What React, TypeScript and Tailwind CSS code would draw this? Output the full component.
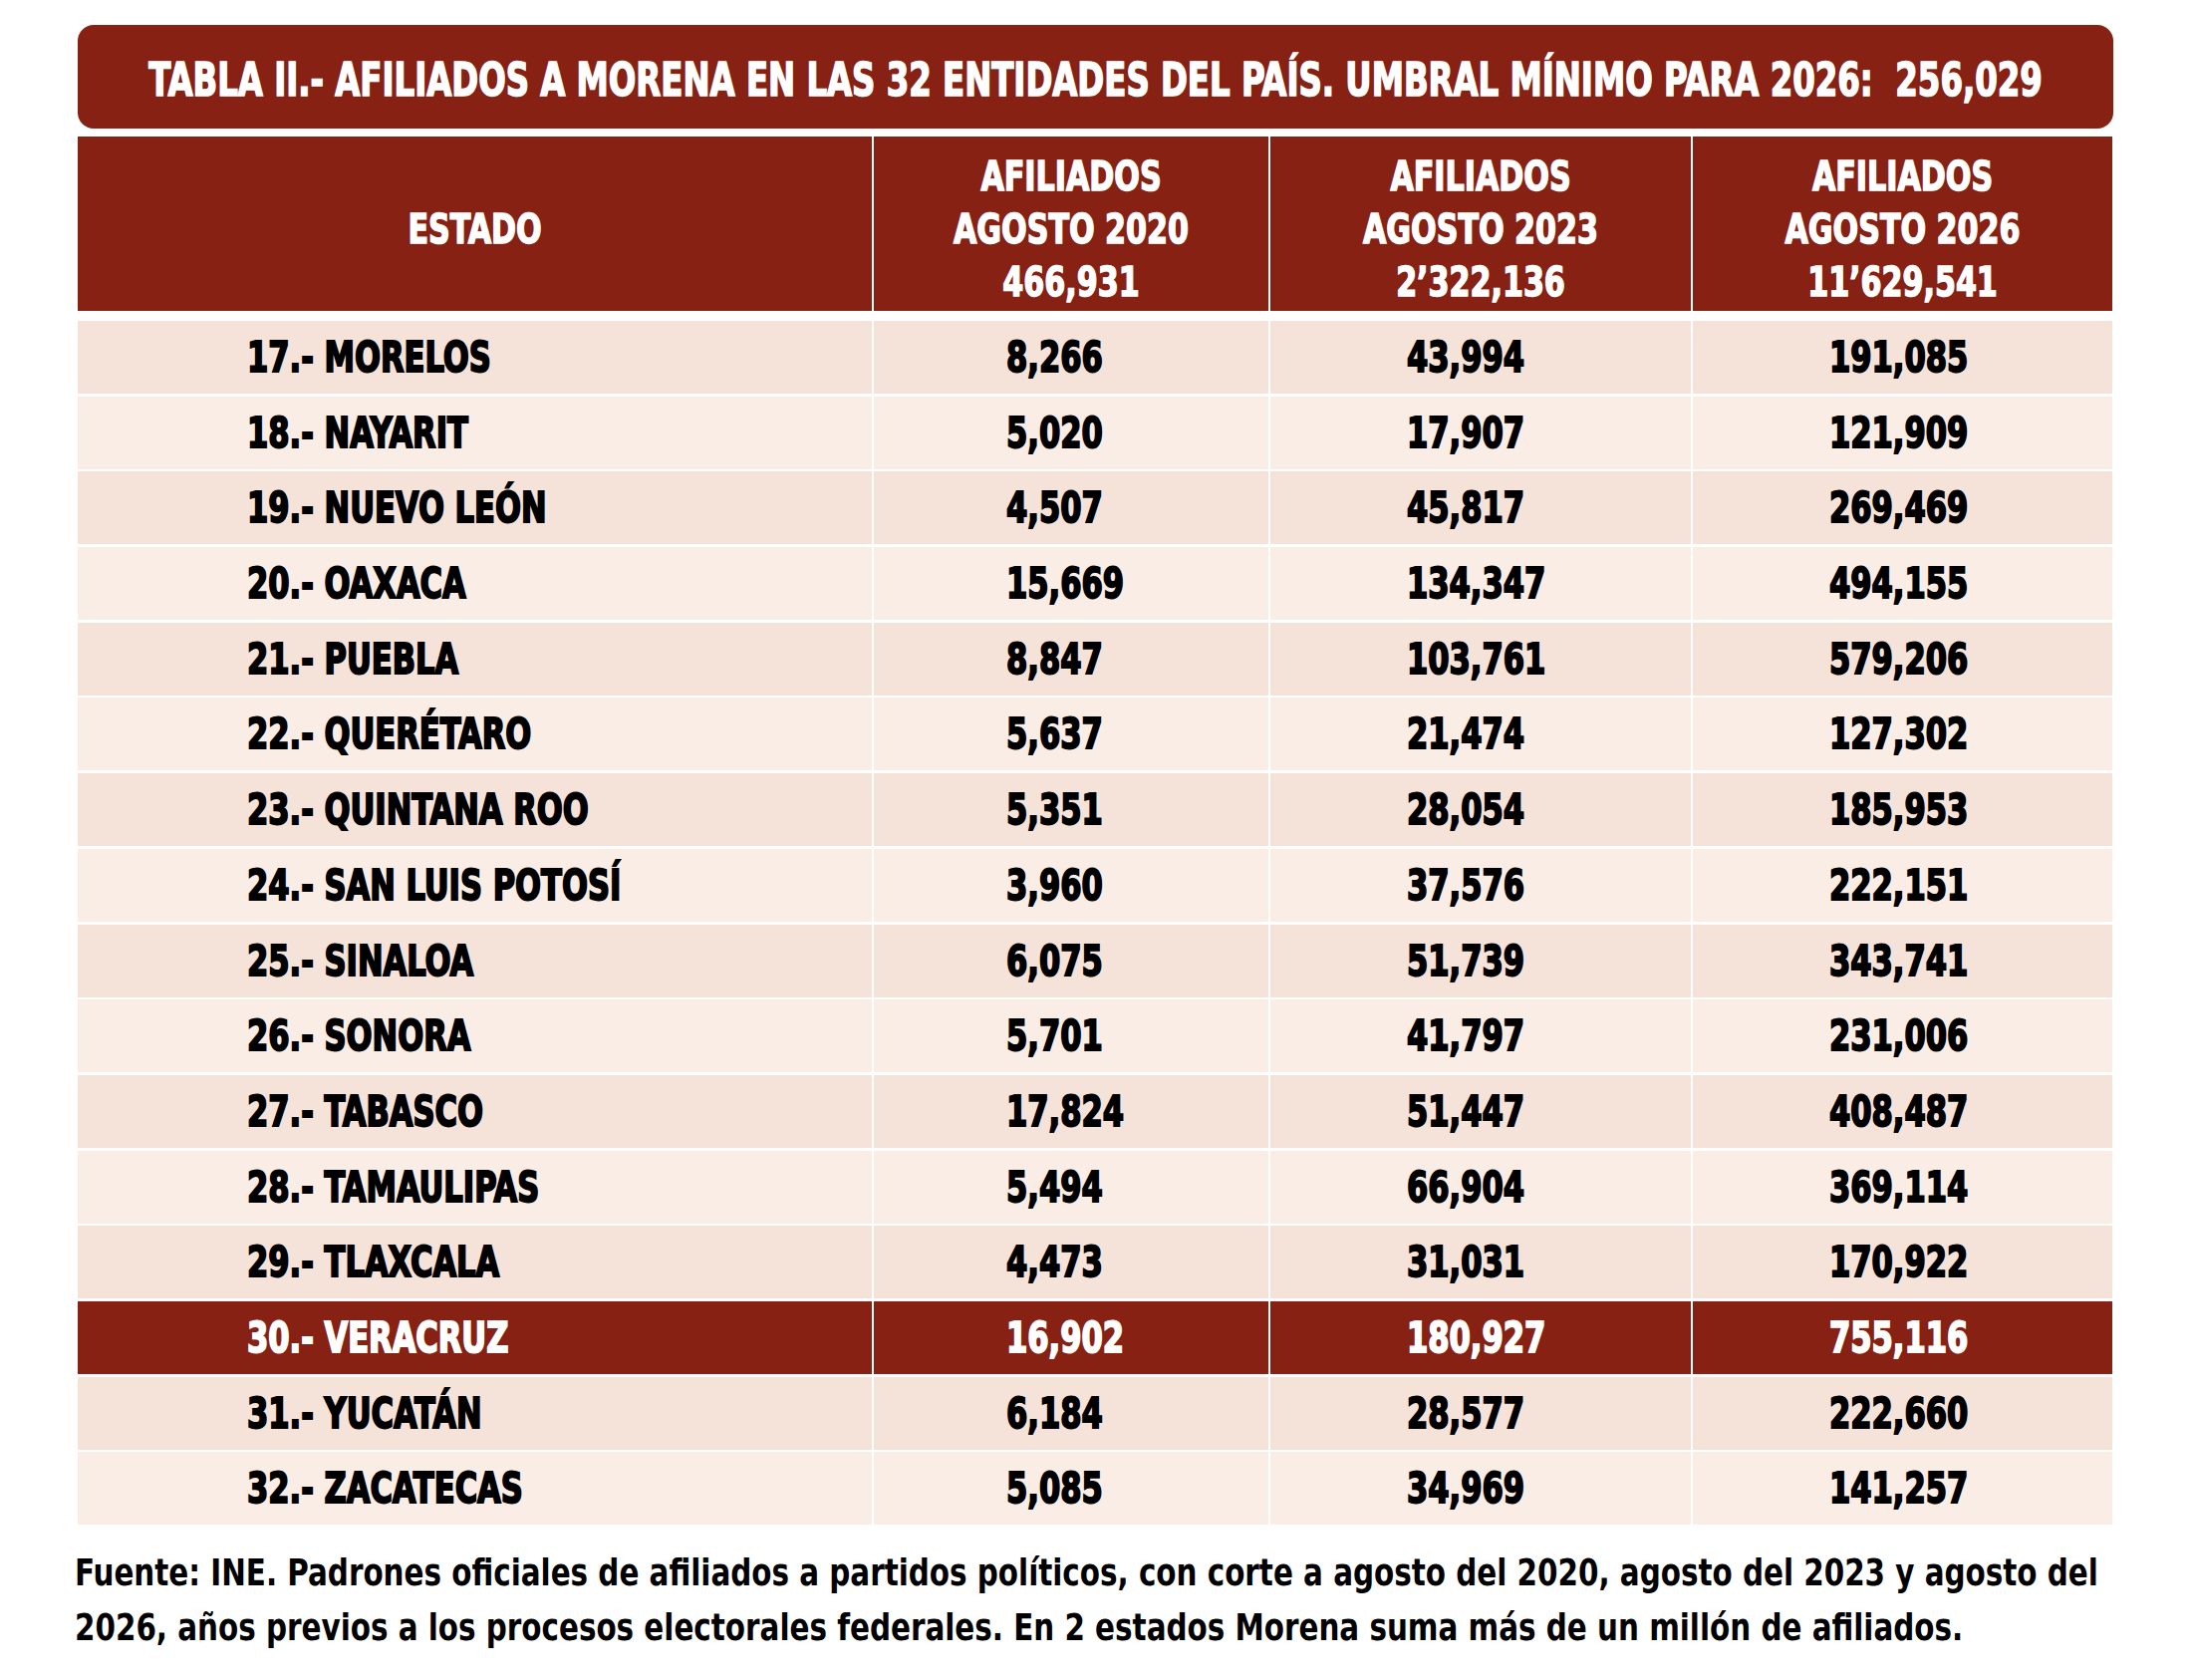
import React from 'react';

// -- data --
const rows = [
  { estado: "17.- MORELOS", a: "8,266", b: "43,994", c: "191,085" },
  { estado: "18.- NAYARIT", a: "5,020", b: "17,907", c: "121,909" },
  { estado: "19.- NUEVO LEÓN", a: "4,507", b: "45,817", c: "269,469" },
  { estado: "20.- OAXACA", a: "15,669", b: "134,347", c: "494,155" },
  { estado: "21.- PUEBLA", a: "8,847", b: "103,761", c: "579,206" },
  { estado: "22.- QUERÉTARO", a: "5,637", b: "21,474", c: "127,302" },
  { estado: "23.- QUINTANA ROO", a: "5,351", b: "28,054", c: "185,953" },
  { estado: "24.- SAN LUIS POTOSÍ", a: "3,960", b: "37,576", c: "222,151" },
  { estado: "25.- SINALOA", a: "6,075", b: "51,739", c: "343,741" },
  { estado: "26.- SONORA", a: "5,701", b: "41,797", c: "231,006" },
  { estado: "27.- TABASCO", a: "17,824", b: "51,447", c: "408,487" },
  { estado: "28.- TAMAULIPAS", a: "5,494", b: "66,904", c: "369,114" },
  { estado: "29.- TLAXCALA", a: "4,473", b: "31,031", c: "170,922" },
  { estado: "30.- VERACRUZ", a: "16,902", b: "180,927", c: "755,116", hot: true },
  { estado: "31.- YUCATÁN", a: "6,184", b: "28,577", c: "222,660" },
  { estado: "32.- ZACATECAS", a: "5,085", b: "34,969", c: "141,257" },
];

const cols = "grid grid-cols-[797px_396px_422px_421px] gap-x-[2px]";

// condensed look: condensed face stretched a bit vertically, stroked to get the heavy weight
const Cell = ({ bg, pl, children }: { bg: string; pl: string; children: React.ReactNode }) => (
  <div className={`${bg} ${pl} flex items-center`}>
    <span className="inline-block origin-left scale-y-[1.25]">{children}</span>
  </div>
);

const HeadCell = ({ lines }: { lines: string[] }) => (
  <div className="bg-[#862114] flex items-center justify-center pt-[10px]">
    <div className="flex flex-col items-center text-white text-[33.5px] leading-[43px] font-bold origin-center scale-y-[1.23] [-webkit-text-stroke:1.2px_currentColor]">
      {lines.map(l => <span key={l}>{l}</span>)}
    </div>
  </div>
);

export default function App() {
  return (
    <div className="w-[2202px] h-[1686px] bg-white font-['DejaVu_Sans_Condensed','DejaVu_Sans',sans-serif]">
      <div className="ml-[78px] pt-[25px] w-[2043px]">
        <div className="h-[104px] rounded-[16px] bg-[#862114] flex items-center justify-center pt-[6px]">
          <span className="inline-block origin-center scale-y-[1.3] text-white text-[36px] font-bold whitespace-pre [-webkit-text-stroke:1.2px_currentColor]">
            {"TABLA II.- AFILIADOS A MORENA EN LAS 32 ENTIDADES DEL PAÍS. UMBRAL MÍNIMO PARA 2026:  256,029"}
          </span>
        </div>

        <div className={`${cols} mt-[8px] h-[175px]`}>
          <HeadCell lines={["ESTADO"]} />
          <HeadCell lines={["AFILIADOS", "AGOSTO 2020", "466,931"]} />
          <HeadCell lines={["AFILIADOS", "AGOSTO 2023", "2’322,136"]} />
          <HeadCell lines={["AFILIADOS", "AGOSTO 2026", "11’629,541"]} />
        </div>

        <div className="mt-[10px] flex flex-col gap-y-[2.7px]">
          {rows.map((r, i) => {
            const bg = r.hot ? "bg-[#862114] text-white" : i % 2 === 0 ? "bg-[#f5e3d9] text-black" : "bg-[#faede5] text-black";
            return (
              <div key={r.estado} className={`${cols} h-[73px] text-[34px] font-bold [-webkit-text-stroke:1.5px_currentColor]`}>
                <Cell bg={bg} pl="pl-[170px]">{r.estado}</Cell>
                <Cell bg={bg} pl="pl-[133px]">{r.a}</Cell>
                <Cell bg={bg} pl="pl-[137px]">{r.b}</Cell>
                <Cell bg={bg} pl="pl-[137px]">{r.c}</Cell>
              </div>
            );
          })}
        </div>

        <p className="mt-[21px] -ml-[3px] origin-top-left scale-y-[1.13] text-[32.7px] leading-[49px] font-bold text-black whitespace-nowrap">
          Fuente: INE. Padrones oficiales de afiliados a partidos políticos, con corte a agosto del 2020, agosto del 2023 y agosto del
          <br />
          2026, años previos a los procesos electorales federales. En 2 estados Morena suma más de un millón de afiliados.
        </p>
      </div>
    </div>
  );
}
